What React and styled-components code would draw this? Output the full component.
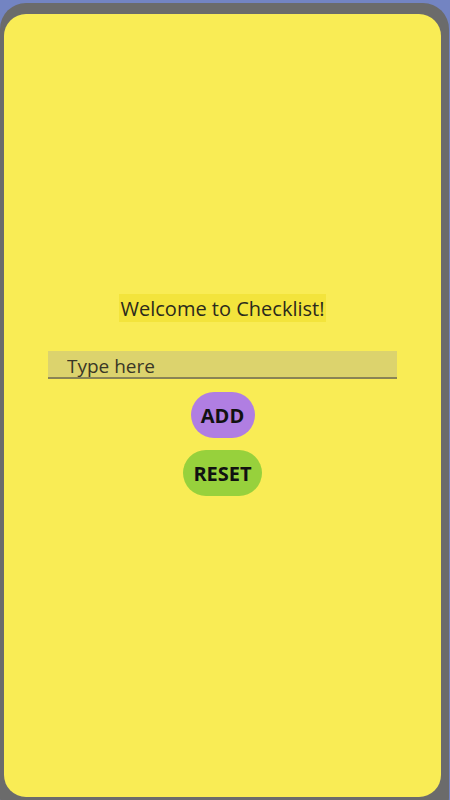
import React, { useState } from "react";
import styled, { createGlobalStyle } from "styled-components";

const GlobalStyle = createGlobalStyle`
  html, body {
    margin: 0;
    padding: 0;
    background: #7384c2;
    font-family: "Open Sans", "Noto Sans", sans-serif;
  }
  body {
    height: 800px;
    overflow: hidden;
  }
`;

const Frame = styled.div`
  margin-top: 3px;
  width: 449px;
  height: 820px;
  box-sizing: border-box;
  background: #6b6b6b;
  border-radius: 26px;
  padding: 11px 8px 0 4px;
`;

const Card = styled.div`
  height: 783px;
  background: #f9ec55;
  border-radius: 22px;
  display: flex;
  flex-direction: column;
  align-items: center;
  padding-top: 280px;
  box-sizing: border-box;
`;

const Title = styled.h1`
  margin: 0;
  font-size: 20px;
  font-weight: 400;
  line-height: 26px;
  padding: 2px 2px 0;
  color: #2b2a1c;
  background: #f3e43c;
`;

const Input = styled.input`
  margin-top: 29px;
  width: 349px;
  height: 28px;
  box-sizing: border-box;
  border: none;
  border-bottom: 2px solid #8a8455;
  background: #dcd36d;
  padding: 3px 0 0 19px;
  font-family: inherit;
  font-size: 19px;
  color: #2b2a1c;
  outline: none;

  &::placeholder {
    color: #3a3726;
    opacity: 1;
  }
`;

const Button = styled.button`
  margin-top: ${(p) => p.$gap}px;
  width: ${(p) => p.$w}px;
  height: 46px;
  padding: 0;
  border: none;
  border-radius: 23px;
  background: ${(p) => p.$bg};
  font-family: inherit;
  font-size: 20px;
  font-weight: 700;
  color: #111;
  cursor: pointer;
`;

const App = () => {
  const [text, setText] = useState("");
  return (
    <>
      <GlobalStyle />
      <Frame>
        <Card>
          <Title>Welcome to Checklist!</Title>
          <Input
            placeholder="Type here"
            value={text}
            onChange={(e) => setText(e.target.value)}
          />
          <Button $bg="#b07ee2" $gap={13} $w={64}>
            ADD
          </Button>
          <Button $bg="#97d13c" $gap={12} $w={79} onClick={() => setText("")}>
            RESET
          </Button>
        </Card>
      </Frame>
    </>
  );
};

export default App;
